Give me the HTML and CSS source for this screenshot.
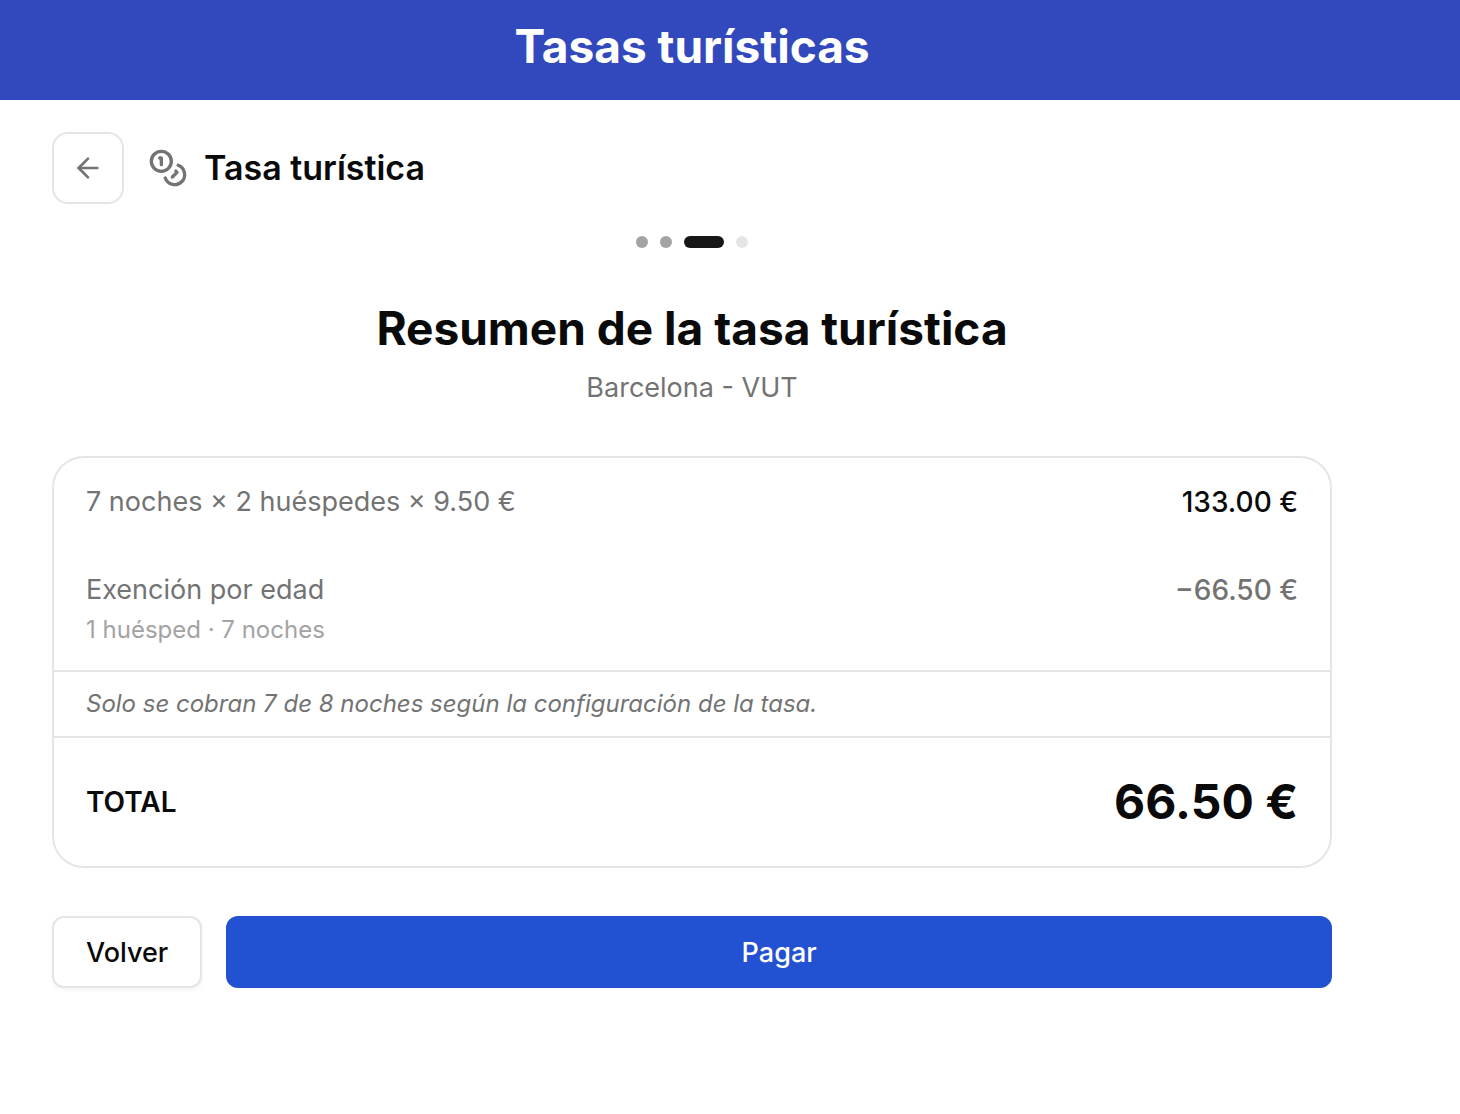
FILE: index.html
```html
<!DOCTYPE html>
<html lang="es">
<head>
    <meta charset="UTF-8">
    <meta name="viewport" content="width=device-width, initial-scale=1.0">
    <title>Tasas turísticas</title>
    <link rel="stylesheet" href="styles.css">
</head>

<body>
    <header class="top-bar">
        <p class="top-title">Tasas turísticas</p>
    </header>

    <main class="content">
        <div class="page-head">
            <button class="back-btn" type="button" aria-label="Atrás">
                <svg width="32" height="32" viewBox="0 0 24 24" fill="none" stroke="currentColor" stroke-width="2" stroke-linecap="round" stroke-linejoin="round">
                    <path d="m12 19-7-7 7-7"/>
                    <path d="M19 12H5"/>
                </svg>
            </button>
            <svg class="coins-icon" width="40" height="40" viewBox="0 0 24 24" fill="none" stroke="currentColor" stroke-width="2" stroke-linecap="round" stroke-linejoin="round">
                <circle cx="8" cy="8" r="6"/>
                <path d="M18.09 10.37A6 6 0 1 1 10.34 18"/>
                <path d="M7 6h1v4"/>
                <path d="m16.71 13.88.7.71-2.82 2.82"/>
            </svg>
            <h1>Tasa turística</h1>
        </div>

        <div class="steps">
            <span class="step done"></span>
            <span class="step done"></span>
            <span class="step current"></span>
            <span class="step"></span>
        </div>

        <div class="summary-head">
            <h2>Resumen de la tasa turística</h2>
            <p>Barcelona - VUT</p>
        </div>

        <section class="card">
            <div class="row">
                <span class="label">7 noches × 2 huéspedes × 9.50 €</span>
                <span class="amount">133.00 €</span>
            </div>
            <div class="row">
                <div>
                    <p class="label">Exención por edad</p>
                    <p class="detail">1 huésped · 7 noches</p>
                </div>
                <span class="amount discount">−66.50 €</span>
            </div>
            <p class="note">Solo se cobran 7 de 8 noches según la configuración de la tasa.</p>
            <div class="total">
                <span class="total-label">TOTAL</span>
                <span class="total-amount">66.50 €</span>
            </div>
        </section>

        <div class="actions">
            <button class="btn btn-back" type="button">Volver</button>
            <button class="btn btn-pay" type="button">Pagar</button>
        </div>
    </main>
</body>
</html>
```
FILE: styles.css
```css
* {
    box-sizing: border-box;
}

body {
    margin: 0;
    background-color: #fff;
    color: #0a0a0a;
    font-family: Inter, "Liberation Sans", sans-serif;
    font-size: 27px;
    line-height: 40px;
}

h1, h2, p {
    margin: 0;
}

button {
    font-family: inherit;
    cursor: pointer;
}

.top-bar {
    padding: 16px 128px 24px 52px;
    background-color: #3249bd;
    color: #fff;
    text-align: center;
}

.top-title {
    font-size: 46px;
    font-weight: 700;
    line-height: 60px;
}

.content {
    padding: 32px 128px 32px 52px;
}

.page-head {
    display: flex;
    align-items: center;
}

.back-btn {
    display: flex;
    align-items: center;
    justify-content: center;
    width: 72px;
    height: 72px;
    padding: 0;
    border: 2px solid #e5e5e5;
    border-radius: 16px;
    background-color: #fff;
    color: #737373;
}

.coins-icon {
    margin-left: 24px;
    margin-right: 16px;
    color: #737373;
}

h1 {
    font-size: 34px;
    font-weight: 600;
    line-height: 56px;
}

.steps {
    display: flex;
    justify-content: center;
    gap: 12px;
    margin-top: 32px;
}

.step {
    width: 12px;
    height: 12px;
    border-radius: 6px;
    background-color: #e5e5e5;
}

.step.done {
    background-color: #a3a3a3;
}

.step.current {
    width: 40px;
    background-color: #171717;
}

.summary-head {
    margin-top: 48px;
    text-align: center;
    color: #737373;
}

h2 {
    margin-bottom: 8px;
    color: #0a0a0a;
    font-size: 46px;
    font-weight: 700;
    line-height: 64px;
}

.card {
    margin-top: 48px;
    border: 2px solid #e5e5e5;
    border-radius: 32px;
}

.row {
    display: flex;
    align-items: flex-start;
    justify-content: space-between;
    padding: 24px 32px;
}

.label {
    color: #737373;
}

.amount {
    font-size: 28px;
    font-weight: 500;
}

.amount.discount {
    color: #737373;
}

.detail {
    margin-top: 4px;
    color: #a3a3a3;
    font-size: 24px;
    line-height: 32px;
}

.note {
    padding: 12px 32px;
    border-top: 2px solid #e5e5e5;
    border-bottom: 2px solid #e5e5e5;
    color: #737373;
    font-size: 24px;
    font-style: italic;
}

.total {
    display: flex;
    align-items: center;
    justify-content: space-between;
    padding: 32px;
}

.total-label {
    font-size: 28px;
    font-weight: 600;
}

.total-amount {
    font-size: 48px;
    font-weight: 700;
    line-height: 64px;
}

.actions {
    display: flex;
    gap: 24px;
    margin-top: 48px;
}

.btn {
    height: 72px;
    padding: 0 32px;
    border: 2px solid #e5e5e5;
    border-radius: 12px;
    font-size: 27px;
    font-weight: 500;
}

.btn-back {
    background-color: #fff;
    color: #0a0a0a;
    box-shadow: 0 2px 4px rgba(0, 0, 0, 0.05);
}

.btn-pay {
    flex: 1;
    border-color: #2251d1;
    background-color: #2251d1;
    color: #fff;
}
```
